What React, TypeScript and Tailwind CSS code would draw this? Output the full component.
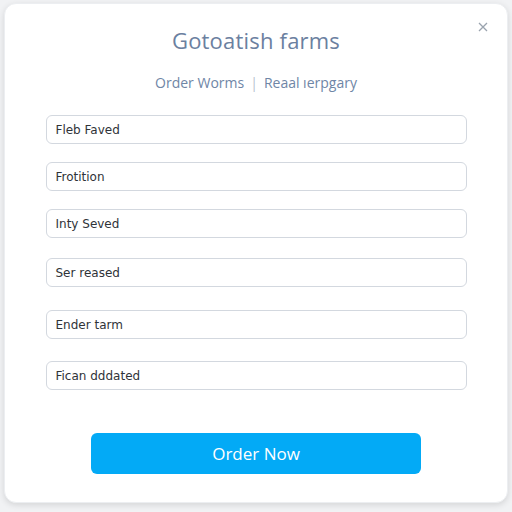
export default function App() {
  const fields = [
    { label: 'Fleb Faved', mt: 'mt-0' },
    { label: 'Frotition', mt: 'mt-[18px]' },
    { label: 'Inty Seved', mt: 'mt-[18px]' },
    { label: 'Ser reased', mt: 'mt-[20px]' },
    { label: 'Ender tarm', mt: 'mt-[23px]' },
    { label: 'Fican dddated', mt: 'mt-[22px]' },
  ];

  return (
    <div className="w-[512px] h-[512px] bg-[#f1f2f4] p-[3px] pl-[4px] pr-[4px] font-['Open_Sans',sans-serif]">
      {/* Card */}
      <div className="relative h-[500px] bg-white rounded-[12px] shadow-[0_2px_6px_rgba(0,0,0,0.12)] border border-[#eceef1] flex flex-col items-center">
        <button className="absolute right-[19px] top-[18px] text-[#9aa3ae]">
          <svg width="10" height="10" viewBox="0 0 10 10" stroke="currentColor" strokeWidth="1.3">
            <path d="M1 1l8 8M9 1l-8 8" />
          </svg>
        </button>

        <h1 className="mt-[22px] text-[22px] leading-[28px] text-[#6b80a0] tracking-[0.2px]">Gotoatish farms</h1>

        <div className="mt-[20px] flex items-center gap-[6px] text-[14px] leading-[18px] text-[#6f86a6]">
          <span>Order Worms</span>
          <span className="text-[#b7c2d0]">|</span>
          <span>Reaal ıerpgary</span>
        </div>

        {/* Fields */}
        <div className="mt-[23px] w-[421px] flex flex-col">
          {fields.map((f) => (
            <div
              key={f.label}
              className={`${f.mt} h-[29px] rounded-[6px] border border-[#d3d8df] flex items-center px-[9px] text-[12px] text-[#2f3338] font-['DejaVu_Sans',sans-serif]`}
            >
              {f.label}
            </div>
          ))}
        </div>

        <button className="mt-[43px] w-[330px] h-[41px] rounded-[6px] bg-[#03aaf6] text-white text-[17px] font-medium font-['Open_Sans',sans-serif]">
          Order Now
        </button>
      </div>
    </div>
  );
}
